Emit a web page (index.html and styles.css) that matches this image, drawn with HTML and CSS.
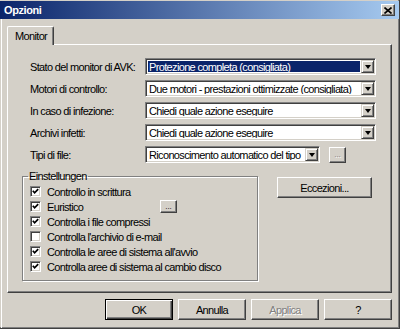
FILE: index.html
```html
<!DOCTYPE html>
<html lang="it">
<head>
    <meta charset="UTF-8">
    <title>Opzioni</title>
    <link rel="stylesheet" href="styles.css">
</head>
<body>

<div class="window">
    <!-- Barra del titolo -->
    <div class="titlebar">
        <span class="title">Opzioni</span>
        <button class="close">
            <svg width="8" height="7" viewBox="0 0 8 7"><path d="M0.5 0.5 L7.5 6.5 M7.5 0.5 L0.5 6.5" stroke="#000" stroke-width="1.6"/></svg>
        </button>
    </div>

    <div class="content">
        <div class="tabs">
            <div class="tab">Monitor</div>
        </div>

        <div class="panel">
            <div class="fields">
                <label>Stato del monitor di AVK:</label>
                <div class="combo">
                    <span class="value selected">Protezione completa (consigliata)</span>
                    <span class="arrow"></span>
                </div>

                <label>Motori di controllo:</label>
                <div class="combo">
                    <span class="value">Due motori - prestazioni ottimizzate (consigliata)</span>
                    <span class="arrow"></span>
                </div>

                <label>In caso di infezione:</label>
                <div class="combo">
                    <span class="value">Chiedi quale azione eseguire</span>
                    <span class="arrow"></span>
                </div>

                <label>Archivi infetti:</label>
                <div class="combo">
                    <span class="value">Chiedi quale azione eseguire</span>
                    <span class="arrow"></span>
                </div>

                <label>Tipi di file:</label>
                <div class="combo-row">
                    <div class="combo short">
                        <span class="value">Riconoscimento automatico del tipo</span>
                        <span class="arrow"></span>
                    </div>
                    <button class="btn dots disabled">...</button>
                </div>
            </div>

            <div class="lower">
                <fieldset class="group">
                    <legend>Einstellungen</legend>
                    <div class="check"><span class="box"><svg class="tick" width="7" height="7" viewBox="0 0 7 7"><path d="M0.8 2.8 L2.6 4.8 L6.2 1.2" fill="none" stroke="#000" stroke-width="1.7"/></svg></span><span>Controllo in scrittura</span></div>
                    <div class="check"><span class="box"><svg class="tick" width="7" height="7" viewBox="0 0 7 7"><path d="M0.8 2.8 L2.6 4.8 L6.2 1.2" fill="none" stroke="#000" stroke-width="1.7"/></svg></span><span class="fixed">Euristico</span><button class="btn dots small">...</button></div>
                    <div class="check"><span class="box"><svg class="tick" width="7" height="7" viewBox="0 0 7 7"><path d="M0.8 2.8 L2.6 4.8 L6.2 1.2" fill="none" stroke="#000" stroke-width="1.7"/></svg></span><span>Controlla i file compressi</span></div>
                    <div class="check"><span class="box"></span><span>Controlla l'archivio di e-mail</span></div>
                    <div class="check"><span class="box"><svg class="tick" width="7" height="7" viewBox="0 0 7 7"><path d="M0.8 2.8 L2.6 4.8 L6.2 1.2" fill="none" stroke="#000" stroke-width="1.7"/></svg></span><span>Controlla le aree di sistema all'avvio</span></div>
                    <div class="check"><span class="box"><svg class="tick" width="7" height="7" viewBox="0 0 7 7"><path d="M0.8 2.8 L2.6 4.8 L6.2 1.2" fill="none" stroke="#000" stroke-width="1.7"/></svg></span><span>Controlla aree di sistema al cambio disco</span></div>
                </fieldset>
                <button class="btn wide">Eccezioni...</button>
            </div>
        </div>

        <div class="actions">
            <button class="btn default">OK</button>
            <button class="btn">Annulla</button>
            <button class="btn disabled">Applica</button>
            <button class="btn">?</button>
        </div>
    </div>
</div>

</body>
</html>
```

FILE: styles.css
```css
* {
    margin: 0;
    padding: 0;
    box-sizing: border-box;
}

body {
    width: 400px;
    height: 329px;
    overflow: hidden;
    background-color: #d4d0c8;
    font-family: 'Liberation Sans', Arial, sans-serif;
    font-size: 11px;
    letter-spacing: -0.65px;
    color: #000;
}

.window {
    width: 400px;
    height: 329px;
    padding-top: 1px;
    border-right: 1px solid #404040;
    border-bottom: 1px solid #404040;
    box-shadow: inset -1px -1px 0 #808080;
    display: flex;
    flex-direction: column;
}

.titlebar {
    height: 18px;
    padding: 0 4px;
    display: flex;
    align-items: center;
    justify-content: space-between;
    background: linear-gradient(to right, #0a246a, #a6caf0);
    color: #fff;
    font-weight: bold;
    letter-spacing: -0.4px;
}

.close {
    width: 14px;
    height: 12px;
    display: flex;
    align-items: center;
    justify-content: center;
    background: #d4d0c8;
    border: 1px solid;
    border-color: #fff #404040 #404040 #fff;
    box-shadow: inset -1px -1px 0 #808080;
}

.content {
    flex: 1;
    margin-left: 1px;
    border-left: 1px solid #fff;
    padding: 7px 7px 0 5px;
}

.tabs {
    display: flex;
}

.tab {
    position: relative;
    z-index: 1;
    width: 47px;
    height: 19px;
    margin-bottom: -1px;
    padding: 3px 0 0 7px;
    background: #d4d0c8;
    border: 1px solid;
    border-bottom: none;
    border-color: #fff #404040 #fff #fff;
    border-radius: 2px 2px 0 0;
    box-shadow: inset -1px 0 0 #808080;
    line-height: 13px;
}

.panel {
    height: 249px;
    padding: 13px 15px 0 14px;
    border: 1px solid;
    border-color: #fff #404040 #404040 #fff;
    box-shadow: inset -1px -1px 0 #808080;
}

.fields {
    padding-left: 8px;
    display: grid;
    grid-template-columns: 115px 1fr;
    grid-auto-rows: 17px;
    row-gap: 5px;
    align-items: center;
}

.combo {
    height: 17px;
    display: flex;
    align-items: stretch;
    background: #fff;
    border: 1px solid;
    border-color: #808080 #fff #fff #808080;
    box-shadow: inset 1px 1px 0 #404040, inset -1px -1px 0 #d4d0c8;
    padding: 1px;
}

.combo.short {
    width: 175px;
}

.combo .value {
    flex: 1;
    margin: 1px;
    padding-left: 1px;
    line-height: 12px;
    white-space: nowrap;
    overflow: hidden;
}

.combo .value.selected {
    background: #0a246a;
    color: #fff;
}

.combo .arrow {
    width: 13px;
    display: flex;
    align-items: center;
    justify-content: center;
    background: #d4d0c8;
    border: 1px solid;
    border-color: #d4d0c8 #404040 #404040 #d4d0c8;
    box-shadow: inset 1px 1px 0 #fff, inset -1px -1px 0 #808080;
}

.combo .arrow::after {
    content: "";
    border-top: 4px solid #000;
    border-left: 3.5px solid transparent;
    border-right: 3.5px solid transparent;
}

.combo-row {
    display: flex;
    align-items: center;
    gap: 9px;
}

.btn {
    width: 68px;
    height: 21px;
    background: #d4d0c8;
    border: 1px solid;
    border-color: #fff #404040 #404040 #fff;
    box-shadow: inset -1px -1px 0 #808080;
    font-family: inherit;
    font-size: 11px;
    letter-spacing: -0.65px;
    color: #000;
}

.btn.default {
    border-color: #000;
    box-shadow: inset 1px 1px 0 #fff, inset -1px -1px 0 #404040, inset -2px -2px 0 #808080;
}

.btn.disabled {
    color: #808080;
    text-shadow: 1px 1px 0 #fff;
}

.btn.dots {
    width: 17px;
    height: 16px;
    font-size: 8px;
    letter-spacing: 0;
    line-height: 8px;
}

.btn.dots.small {
    height: 13px;
}

.btn.wide {
    width: 95px;
    margin-top: 7px;
    margin-left: 19px;
}

.lower {
    margin-top: 7px;
    display: flex;
    align-items: flex-start;
}

.group {
    width: 236px;
    height: 111px;
    padding: 1px 0 0 7px;
    border: 1px solid #808080;
    box-shadow: inset 1px 1px 0 #fff, 1px 1px 0 #fff;
}

.group legend {
    margin-left: -2px;
    padding: 0 1px;
    line-height: 13px;
}

.check {
    height: 15px;
    display: flex;
    align-items: center;
    gap: 6px;
    white-space: nowrap;
}

.check .fixed {
    width: 107px;
}

.box {
    width: 11px;
    height: 11px;
    flex: none;
    display: flex;
    align-items: center;
    justify-content: center;
    background: #fff;
    border: 1px solid;
    border-color: #808080 #fff #fff #808080;
    box-shadow: inset 1px 1px 0 #404040, inset -1px -1px 0 #d4d0c8;
}

.tick {
    display: block;
}

.actions {
    margin-top: 6px;
    display: flex;
    justify-content: flex-end;
    gap: 5px;
}
```
